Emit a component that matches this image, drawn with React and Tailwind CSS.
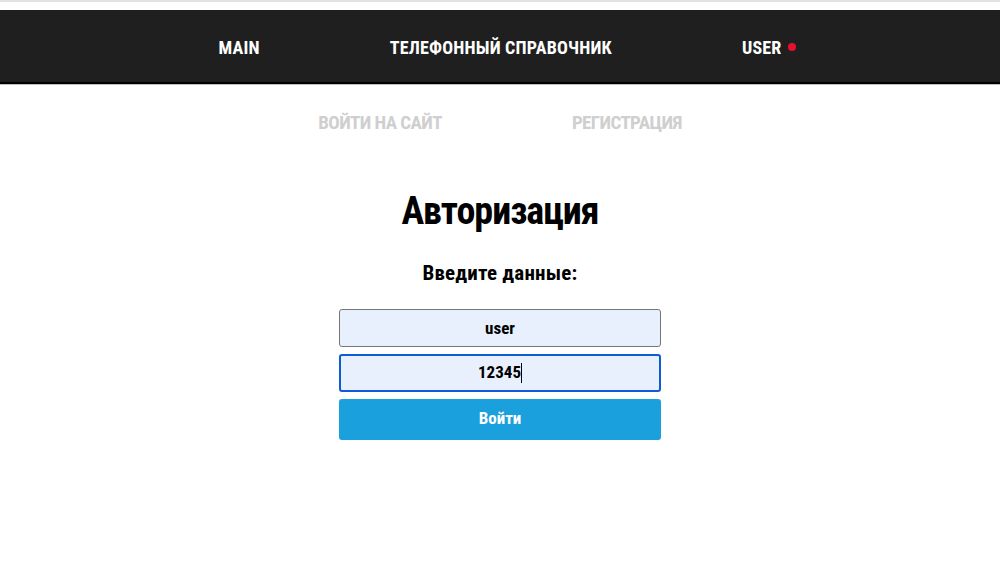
import React from 'react';

const font = { fontFamily: 'Roboto, "Noto Sans", sans-serif', fontStretch: 'condensed' };

const App = () => {
  return (
    <div className="min-h-[584px] bg-white" style={font}>
      {/* Top strip */}
      <div className="h-[2px] bg-[#e2e2e2]"></div>
      <div className="h-[8px] bg-white"></div>

      {/* Header */}
      <header className="h-[74px] bg-[#1f1f1f] border-b-2 border-black flex items-center justify-center">
        <nav className="flex items-center gap-[130px] text-white text-[18px] font-bold uppercase pt-[2px] tracking-[0.2px]">
          <a href="#">Main</a>
          <a href="#">Телефонный справочник</a>
          <a href="#" className="relative">
            User
            <span className="absolute -right-[14px] top-1/2 -translate-y-1/2 w-[8px] h-[8px] rounded-full bg-[#e8112d]"></span>
          </a>
        </nav>
      </header>
      <div className="h-px bg-[#bdbdbd]"></div>

      {/* Auth tabs */}
      <div className="flex justify-center gap-[130px] pt-[24px] text-[19px] font-bold uppercase text-[#cfcfcf] tracking-[-0.6px]">
        <a href="#">Войти на сайт</a>
        <a href="#">Регистрация</a>
      </div>

      {/* Form */}
      <div className="flex flex-col items-center pt-[54px]">
        <h1 className="text-[38px] font-bold text-black leading-none tracking-[-1px]">Авторизация</h1>
        <h2 className="mt-[33px] text-[21px] font-bold text-black leading-none tracking-[0.2px]">Введите данные:</h2>
        <form className="mt-[25px] w-[322px] flex flex-col gap-[7px]">
          <input
            type="text"
            defaultValue="user"
            className="h-[38px] w-full rounded-[3px] border border-[#767676] bg-[#e8f0fe] text-center text-[17px] font-bold text-black outline-none"
            style={font}
          />
          <div className="h-[38px] w-full rounded-[3px] border-2 border-[#0b5cd5] bg-[#e8f0fe] flex items-center justify-center text-[17px] font-bold text-black">
            <span>12345</span>
            <span className="w-px h-[20px] bg-black"></span>
          </div>
          <button
            type="button"
            className="h-[41px] w-full rounded-[3px] bg-[#1aa0dc] text-white text-[17px] font-bold"
            style={font}
          >
            Войти
          </button>
        </form>
      </div>
    </div>
  );
};

export default App;
